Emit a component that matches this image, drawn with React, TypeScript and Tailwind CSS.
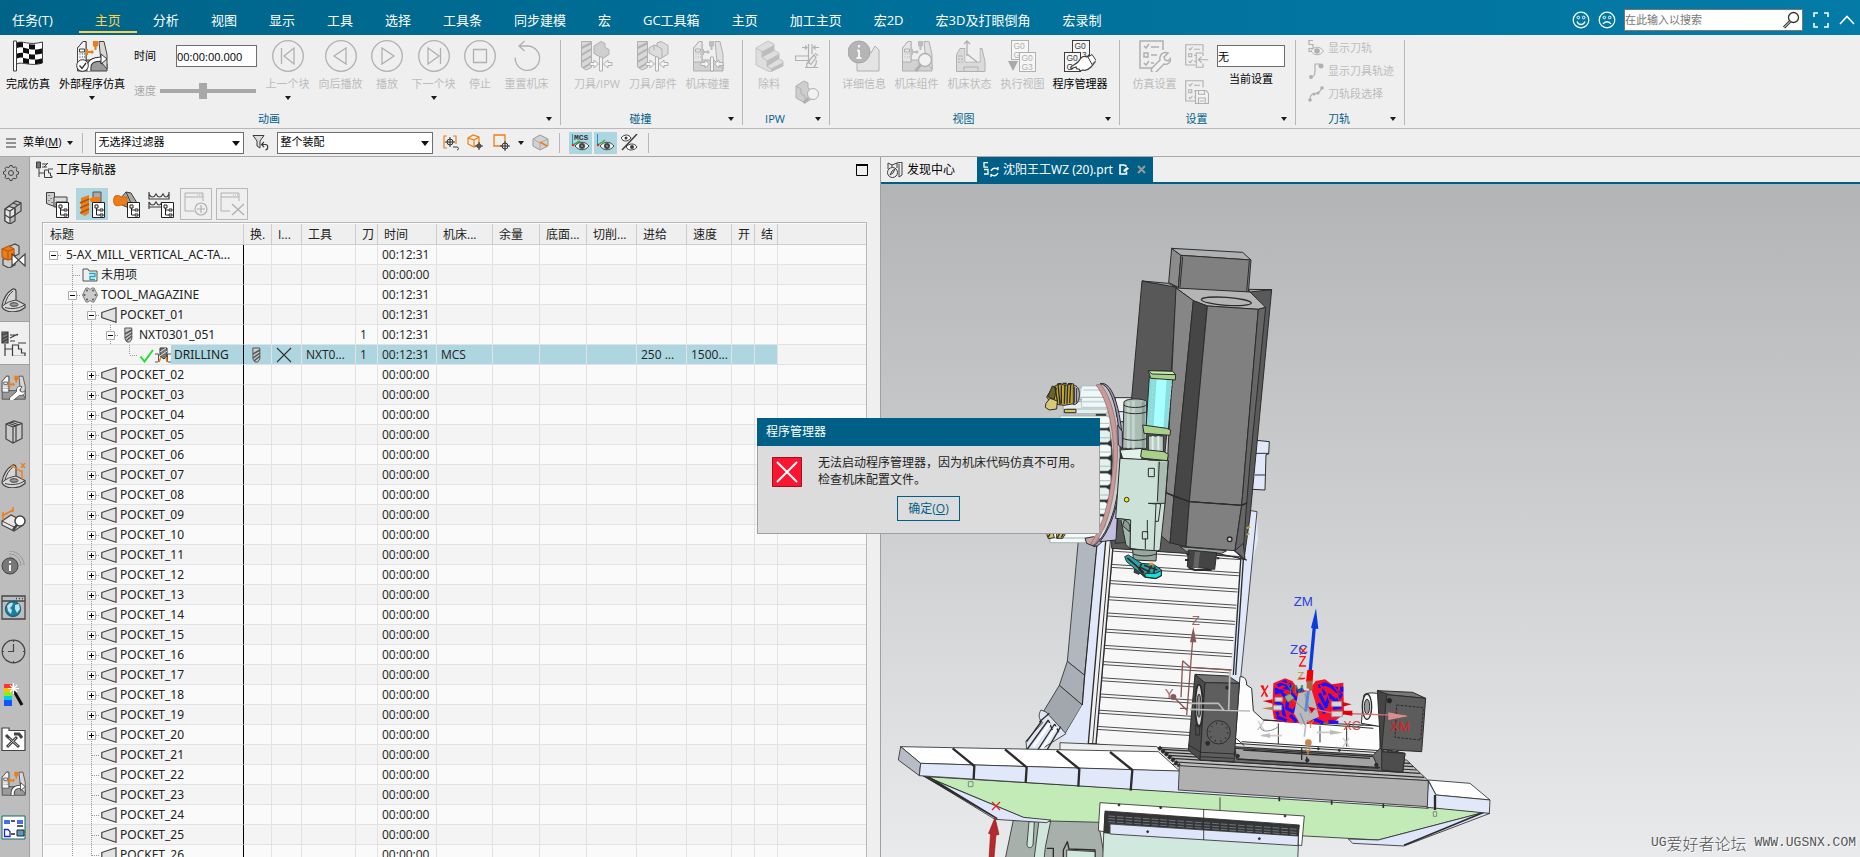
import React from "react";
import type { ReactNode } from "react";

const G = "#b0b0b0";
const D = "#3c3c3c";
const O = "#ef7d17";

type SvgProps = { size?: number; box?: string; children: ReactNode; className?: string };
function Svg({ size = 32, box = "0 0 32 32", children, className = "" }: SvgProps) {
  return (
    <svg width={size} height={size} viewBox={box} fill="none" className={"shrink-0 " + className} aria-hidden="true">
      {children}
    </svg>
  );
}

function Arrow({ className = "" }: { className?: string }) {
  return (
    <svg width="6" height="4" viewBox="0 0 6 4" className={"shrink-0 " + className} aria-hidden="true">
      <path d="M0 0h6L3 4z" fill="#1a1a1a" />
    </svg>
  );
}

/* ---------- ribbon icons ---------- */

function Flag() {
  return (
    <Svg>
      <path d="M1.500 1h3v30h-3z" fill="#fff" stroke={D} />
      <path d="M4.500 3c6-3 12 3 26-1v21c-12 4-20-2-26 1z" fill="#fff" stroke={D} />
      <path
        d="M5 3c2-1 4-1 6-.5v5C9 7 7 7 5 8zM17 4c2 .6 4 .6 6 .5v5c-2 .2-4 0-6-.5zM11 7.500c2 .3 4 1 6 1.500v5c-2-.5-4-1-6-1.300zM23 9.500c2 0 5-.5 7-1v5c-2 .7-5 1-7 1zM5 13.500c2-.8 4-1 6-.8v5c-2-.3-4 0-6 .8zM17 14c2 .6 4 .6 6 .5v5c-2 .2-4 0-6-.5zM11 17.700c2 .3 4 1 6 1.300v5c-2-.5-4-1-6-1.300zM23 19.500c2 0 5-.5 7-1v4.500c-2 .7-5 1-7 1z"
        fill="#111"
      />
    </Svg>
  );
}

function Cnc({ color = false, children, size = 32 }: { color?: boolean; children?: ReactNode; size?: number }) {
  const s = color ? "#444" : G;
  const o = color ? O : "#bdbdbd";
  return (
    <Svg size={size}>
      <path d="M1.500 8L7 1.500h3V20h12l4 4h5v7H1.500z" fill={color ? "#9b9b9b" : "#d2d2d2"} stroke={s} />
      <path d="M1.500 8L7 1.500h3V22H1.500z" fill={color ? "#f4f4f4" : "#e6e6e6"} stroke={s} />
      <path d="M23 1.500h5l3 13V29l-6-7z" fill={color ? "#d8d8d8" : "#e0e0e0"} stroke={s} />
      <path d="M3.500 9h5v3h-5zM3.500 14h1M6 14h1M3.500 17h1M6 17h1M8 14h1M8 17h1" stroke={s} />
      <path d="M17 1h5v5l-1.500 1v3h-2V7L17 6z" fill={o} />
      <path d="M10 9h2v2h3l1-1 2 2-2 2-1-1h-3v2h-2z" fill={o} />
      {children}
    </Svg>
  );
}

function ExternalSim() {
  return (
    <Cnc color>
      <path d="M13 31c-1-9 3-12 14-12" stroke="#333" strokeWidth="5" />
      <path d="M13 31c-1-9 3-12 14-12" stroke="#fff" strokeWidth="3" />
      <path d="M25 14l6 5-6 5z" fill="#fff" stroke="#333" />
      <circle cx="6.500" cy="25.500" r="5.800" fill="#fff" stroke="#333" />
      <path d="M3.500 25.500l2.500 3 4-5.500" stroke="#333" strokeWidth="1.300" />
    </Cnc>
  );
}

const collide = (
  <g fill="#f4f4f4" stroke={G}>
    <path d="M18.500 17h3v14h-3z" />
    <path d="M9 22.500h4V20l4.500 4-4.500 4v-2.500H9z" />
    <path d="M31 22.500h-4V20l-4.500 4 4.500 4v-2.500h4z" />
  </g>
);

const drill = (
  <g stroke={G}>
    <path d="M.5 1.500h10v26L5 30l-4.500-3z" fill="#d8d8d8" />
    <path d="M.5 8l10-5M.5 15l10-6M.5 22l10-6M2 28l8-5" strokeWidth="2" />
  </g>
);

function ToolIpw() {
  return (
    <Svg>
      {drill}
      <path d="M13 6l7-4.500 4 2v4l4 2v5l-6 4-9-5z" fill="#cfcfcf" stroke={G} />
      {collide}
    </Svg>
  );
}
function ToolPart() {
  return (
    <Svg>
      {drill}
      <path d="M12 8l5-3 3 1V3l4-1.500 7 4V14l-8 5-11-6z" fill="#dcdcdc" stroke={G} />
      <path d="M20 6l5 3v9M17 5v5" stroke={G} />
      {collide}
    </Svg>
  );
}
function Removal() {
  return (
    <Svg>
      <path d="M3 8l12-7 6 3v6l5 3v6l4 2v5l-13 6-14-7z" fill="#dedede" stroke="#c4c4c4" />
      <path d="M3 8l6 3.500v6l5 3v6l4 2" stroke="#c0c0c0" />
      <path d="M9 11.500L21 5v6L9 17.500zM14 20.500L26 14v5l-12 7.500zM18 28.500l12-6V26l-12 6z" fill="#bdbdbd" />
    </Svg>
  );
}
function Microscope() {
  return (
    <Svg size={24} box="0 0 24 24">
      <g stroke={G} strokeWidth="1.200">
        <path d="M13.500 0v16M17 0v10M12 3.500H7M10 1.500l2 2-2 2M18.500 3.500H24M20.500 1.500l-2 2 2 2M.5 12h13v4.500H.5z" />
        <path d="M10 23.500h13M19 11l-6 7 3 2.500 5-7zM20 9.500l3 2M12 23c-1-4 1-5 3-5M21 16c1 3 0 5-2 7" fill="#eee" />
      </g>
    </Svg>
  );
}
function CubeLens() {
  return (
    <Svg size={24} box="0 0 24 24">
      <path d="M1 6l8-5 4 2v5l5 3v7l-8 5-9-5z" fill="#cecece" stroke={G} />
      <path d="M1 6l5 3v5l4 2v7" stroke={G} />
      <circle cx="18" cy="14" r="5.500" fill="#f2f2f2" stroke={G} />
      <path d="M13.500 18l-5 5" stroke={G} strokeWidth="2.500" />
    </Svg>
  );
}
function Info() {
  return (
    <Svg>
      <path d="M9 31V13h14l4-7 4 4v21z" fill="#e4e4e4" stroke={G} />
      <circle cx="11" cy="12" r="11" fill="#b5b5b5" stroke="#a6a6a6" />
      <path d="M11 5v2.500M11 10v8M9 10.500h2M8.500 18h5" stroke="#f5f5f5" strokeWidth="2" />
    </Svg>
  );
}
function CncLens() {
  return (
    <Cnc>
      <circle cx="24" cy="20" r="6.500" fill="#f2f2f2" stroke={G} strokeWidth="1.400" />
      <path d="M19.500 25l-5 6" stroke={G} strokeWidth="3" />
    </Cnc>
  );
}
function CncState() {
  return (
    <Svg>
      <path d="M2.500 15L6 8.500h5V22h15V8.500h2l3 13v10H2.500z" fill="#dadada" stroke={G} />
      <path d="M11.500 9v12.500h14V9z" fill="#efefef" />
      <path d="M4 16h5M4 19h2M7 19h2M4 22h2M7 22h2M10 31v-4h14v4" stroke={G} />
      <path d="M13 16V1.500M10 4l3-3 3 3M13 14l10 8M13 16" stroke={G} strokeWidth="1.300" />
    </Svg>
  );
}
function GCode({ dark = false }: { dark?: boolean }) {
  const c = dark ? D : G;
  return (
    <Svg>
      <rect x={dark ? 8.5 : 4.5} y=".5" width="17" height="19" fill="#f6f6f6" stroke={c} />
      <text x={dark ? 10.5 : 6.5} y="8.500" fontSize="8.500" fontFamily="Liberation Sans, sans-serif" fill={c}>G0</text>
      <text x={dark ? 18 : 6.5} y="18" fontSize="8.500" fontFamily="Liberation Sans, sans-serif" fill={c}>{dark ? "3" : "G"}</text>
      <rect x={dark ? 0.5 : 12.5} y="12.500" width="16" height="19" fill="#f6f6f6" stroke={c} />
      <text x={dark ? 2.5 : 14.5} y="21" fontSize="8.500" fontFamily="Liberation Sans, sans-serif" fill={c}>G0</text>
      <text x={dark ? 2.5 : 14.5} y="30" fontSize="8.500" fontFamily="Liberation Sans, sans-serif" fill={c}>{dark ? "G" : "G3"}</text>
      {dark ? (
        <path d="M7 27c2-2 5-3 7-5l3-4c2-2 4-2 6-1l2-2 6 7-4 5c-2 2-5 4-8 3l-3 1-1-2-2 0-1-2-3 1c-1 1-3 1-2-1z" fill="#fff" stroke={D} strokeWidth="1.200" />
      ) : (
        <path d="M1 21h10L6 31z" fill="#a9a9a9" />
      )}
      {dark && <path d="M24 17l4-2.500 4 6-4 4z" fill="#fff" stroke={D} />}
    </Svg>
  );
}
function Checklist({ kind, size = 32 }: { kind: "wrench" | "in" | "save"; size?: number }) {
  return (
    <Svg size={size}>
      <path d="M24 10V1H1v27h13" stroke={G} strokeWidth="1.500" />
      <path d="M5 6l2 2 3-4M12 7h8M5 13h4v4H5zM12 15h6M5 23l2 2 3-4M12 23h3" stroke={G} strokeWidth="1.500" />
      {kind === "wrench" && (
        <path d="M13 28l8-8c-1-5 3-9 8-7l-4 4 1 3 3 1 3-3c0 5-4 7-7 6l-8 8c-3 2-6-1-4-4z" fill="#f2f2f2" stroke={G} strokeWidth="1.500" />
      )}
      {kind === "in" && (
        <>
          <path d="M24 16v-4h-9v19h9v-5" fill="#efefef" stroke={G} strokeWidth="1.500" />
          <path d="M31 21H18M22 17l-4 4 4 4" stroke={G} strokeWidth="1.500" />
        </>
      )}
      {kind === "save" && (
        <>
          <path d="M14 14h14l3.300 4v13.300H14z" fill="#f2f2f2" stroke={G} strokeWidth="1.500" />
          <path d="M18 14v5h8v-5M18 31v-7h9v7M20 28h5" stroke={G} strokeWidth="1.500" />
        </>
      )}
    </Svg>
  );
}
function Round({ children }: { children: ReactNode }) {
  return (
    <Svg>
      <circle cx="16" cy="16" r="15.300" stroke={G} strokeWidth="1.300" />
      <g stroke={G} strokeWidth="1.300">{children}</g>
    </Svg>
  );
}
const prevIcon = <Round><path d="M9.500 8v16M22 8v16L12 16z" /></Round>;
const backIcon = <Round><path d="M21 8v16L9 16z" /></Round>;
const playIcon = <Round><path d="M11 8v16l12-8z" /></Round>;
const nextIcon = <Round><path d="M22.500 8v16M10 8v16l11-8z" /></Round>;
const stopIcon = <Round><path d="M9.500 9.500h13v13h-13z" /></Round>;
const resetIcon = (
  <Svg>
    <path d="M8 6h9a12.200 12.200 0 1 1-12.800 11.500M13.500 1L8 6l5.500 5" stroke={G} strokeWidth="1.300" />
  </Svg>
);

/* ---------- ribbon ---------- */

function Tool({ icon, label, w, off = true, drop = false }: { icon: ReactNode; label: string; w: string; off?: boolean; drop?: boolean }) {
  return (
    <button type="button" disabled={off} className={"flex flex-col items-center self-start " + w + (off ? " text-[#bcbcbc]" : " text-black")}>
      {icon}
      <span className="mt-1 text-[11px] leading-4 whitespace-nowrap">{label}</span>
      {drop && <Arrow className="mt-1" />}
    </button>
  );
}

function Group({ title, children }: { title: string; children: ReactNode }) {
  return (
    <section className="flex flex-col border-r border-[#b8b8b8]">
      <div className="flex flex-1">{children}</div>
      <div className="flex h-3 items-center">
        <h2 className="flex-1 text-center text-[11px] leading-3 text-[#00618a]">{title}</h2>
        <button type="button" aria-label={title} className="flex w-[22px] justify-center"><Arrow /></button>
      </div>
    </section>
  );
}

function Ribbon() {
  return (
    <div className="flex h-[94px] shrink-0 border-b border-[#b8b8b8] bg-[#efefef] pt-[5px] pb-[3px]">
      <Group title="动画">
        <div className="flex pr-[7px]">
          <Tool icon={<Flag />} label="完成仿真" w="w-14" off={false} />
          <Tool icon={<ExternalSim />} label="外部程序仿真" w="w-[72px]" off={false} drop />
          <div className="w-[133px] pt-[5px] pr-1 pl-1.5 text-[11px]">
            <div className="flex h-[22px] items-center justify-between">
              <label htmlFor="time">时间</label>
              <input id="time" defaultValue="00:00:00.000" className="h-full w-[81px] border border-[#6e6e6e] bg-white" />
            </div>
            <div className="mt-4 flex h-4 items-center gap-1 text-[#a8a8a8]">
              <label htmlFor="speed">速度</label>
              <input
                id="speed"
                type="range"
                disabled
                defaultValue="44"
                className="h-1 w-24 appearance-none bg-[#a8a8a8] [&::-webkit-slider-thumb]:h-4 [&::-webkit-slider-thumb]:w-2 [&::-webkit-slider-thumb]:appearance-none [&::-webkit-slider-thumb]:bg-[#a8a8a8]"
              />
            </div>
          </div>
          <Tool icon={prevIcon} label="上一个块" w="w-[53px]" drop />
          <Tool icon={backIcon} label="向后播放" w="w-[53px]" />
          <Tool icon={playIcon} label="播放" w="w-10" />
          <Tool icon={nextIcon} label="下一个块" w="w-[53px]" drop />
          <Tool icon={stopIcon} label="停止" w="w-10" />
          <Tool icon={resetIcon} label="重置机床" w="w-[53px]" />
        </div>
      </Group>
      <Group title="碰撞">
        <div className="flex px-2">
          <Tool icon={<ToolIpw />} label="刀具/IPW" w="w-14" />
          <Tool icon={<ToolPart />} label="刀具/部件" w="w-14" />
          <Tool icon={<Cnc>{collide}</Cnc>} label="机床碰撞" w="w-[53px]" />
        </div>
      </Group>
      <Group title="IPW">
        <div className="flex pr-2.5">
          <Tool icon={<Removal />} label="除料" w="w-[52px]" />
          <div className="flex w-6 flex-col gap-3 pt-1 leading-none">
            <button type="button" disabled aria-label="显微检查"><Microscope /></button>
            <button type="button" disabled aria-label="检查 IPW"><CubeLens /></button>
          </div>
        </div>
      </Group>
      <Group title="视图">
        <div className="flex px-2">
          <Tool icon={<Info />} label="详细信息" w="w-[52px]" />
          <Tool icon={<CncLens />} label="机床组件" w="w-[53px]" />
          <Tool icon={<CncState />} label="机床状态" w="w-[53px]" />
          <Tool icon={<GCode />} label="执行视图" w="w-[53px]" />
          <Tool icon={<GCode dark />} label="程序管理器" w="w-[62px]" off={false} />
        </div>
      </Group>
      <Group title="设置">
        <div className="flex pr-2.5 pl-2">
          <Tool icon={<Checklist kind="wrench" />} label="仿真设置" w="w-[53px]" />
          <div className="ml-1 flex w-6 flex-col gap-3 pt-1">
            <button type="button" disabled aria-label="加载设置"><Checklist kind="in" size={24} /></button>
            <button type="button" disabled aria-label="保存设置"><Checklist kind="save" size={24} /></button>
          </div>
          <div className="ml-2 flex flex-col items-center gap-1 pt-[5px] text-[11px] leading-4">
            <input id="current" defaultValue="无" className="h-[22px] w-[68px] border border-[#6e6e6e] bg-white" />
            <label htmlFor="current">当前设置</label>
          </div>
        </div>
      </Group>
      <Group title="刀轨">
        <div className="flex flex-col gap-[7px] pr-2.5 pl-3 text-[11px] leading-4 text-[#bcbcbc]">
          <button type="button" disabled className="flex items-center gap-1">
            <Svg size={16} box="0 0 16 16">
              <path d="M5 .5H1v4h4v4H1v3h2" stroke={G} strokeWidth="1.200" />
              <path d="M3 11c3-5 9-5 12.500 0-3.500 5-9.500 5-12.500 0z" fill="#f2f2f2" stroke={G} />
              <circle cx="9" cy="11" r="2.800" fill={G} />
            </Svg>
            显示刀轨
          </button>
          <button type="button" disabled className="flex items-center gap-1">
            <Svg size={16} box="0 0 16 16">
              <path d="M3 14c4-1 4-3 4-7V1h5" stroke={G} strokeWidth="1.200" />
              <circle cx="3" cy="14" r="2" fill={G} /><circle cx="13" cy="3" r="2.500" fill={G} />
            </Svg>
            显示刀具轨迹
          </button>
          <button type="button" disabled className="flex items-center gap-1">
            <Svg size={16} box="0 0 16 16">
              <path d="M2 14c0-4 1-6 4-6s6-2 8-6" stroke={G} strokeWidth="1.200" />
              <circle cx="2" cy="14" r="1.800" fill={G} /><circle cx="6" cy="8" r="1.600" fill={G} /><circle cx="10" cy="7" r="1.600" fill={G} /><circle cx="14" cy="2" r="1.800" fill={G} />
            </Svg>
            刀轨段选择
          </button>
        </div>
      </Group>
    </div>
  );
}

/* ---------- header ---------- */

const tabs = ["分析", "视图", "显示", "工具", "选择", "工具条", "同步建模", "宏", "GC工具箱", "主页", "加工主页", "宏2D", "宏3D及打眼倒角", "宏录制"];

function Face({ sad = false }: { sad?: boolean }) {
  return (
    <Svg size={18} box="0 0 18 18">
      <circle cx="9" cy="9" r="7.800" stroke="#fff" strokeWidth="1.200" />
      <circle cx="6.300" cy="6.500" r="1.300" stroke="#fff" /><circle cx="11.700" cy="6.500" r="1.300" stroke="#fff" />
      <path d={sad ? "M5 13c2-3 6-3 8 0" : "M5 10.500c1.500 4 6.500 4 8 0"} stroke="#fff" strokeWidth="1.300" />
    </Svg>
  );
}

function Header() {
  return (
    <header className="flex h-[35px] shrink-0 items-end bg-gradient-to-r from-[#006489] via-[#00709a] to-[#047ba7] text-[13px] text-white">
      <nav className="flex h-[30px] whitespace-nowrap">
        <a href="#task" className="mr-2.5 pr-4 pl-3 leading-[30px]">任务(T)</a>
        <a href="#home" className="mb-0.5 border-b-2 border-[#ffd04a] px-4 leading-[30px] text-[#ffd04a]">主页</a>
        {tabs.map((t) => (
          <a key={t} href={"#" + t} className="px-4 leading-[30px]">{t}</a>
        ))}
      </nav>
      <div className="ml-auto flex h-[30px] items-center pr-[5px]">
        <button type="button" aria-label="满意"><Face /></button>
        <button type="button" aria-label="不满意" className="ml-2"><Face sad /></button>
        <div className="ml-2 flex h-[22px] w-[179px] items-center border border-[#777] bg-white pr-0.5">
          <input type="search" aria-label="搜索" placeholder="在此输入以搜索" className="min-w-0 flex-1 text-[11px] text-black outline-none placeholder:text-[#777]" />
          <Svg size={18} box="0 0 18 18">
            <circle cx="11.500" cy="6.500" r="5" stroke="#333" strokeWidth="1.300" />
            <path d="M8 10.500L2 16.500" stroke="#333" strokeWidth="3" /><path d="M8 10.500L2 16.500" stroke="#fff" />
          </Svg>
        </div>
        <button type="button" aria-label="全屏" className="ml-2.5">
          <Svg size={16} box="0 0 16 16"><path d="M1 5V1h4M11 1h4v4M15 11v4h-4M5 15H1v-4" stroke="#fff" strokeWidth="1.600" /></Svg>
        </button>
        <button type="button" aria-label="收起功能区" className="ml-2.5">
          <Svg size={16} box="0 0 16 16"><path d="M1 12l7-7.500 7 7.500" stroke="#fff" strokeWidth="1.600" /></Svg>
        </button>
      </div>
    </header>
  );
}

/* ---------- selection bar ---------- */

function Combo({ label, value, w }: { label: string; value: string; w: string }) {
  return (
    <div className={"relative h-[22px] " + w}>
      <select aria-label={label} className="h-full w-full appearance-none border border-[#6e6e6e] bg-white pl-0.5 text-[11px]">
        <option>{value}</option>
      </select>
      <svg width="8" height="5" viewBox="0 0 8 5" className="pointer-events-none absolute top-[9px] right-1" aria-hidden="true">
        <path d="M0 0h8L4 5z" fill="#111" />
      </svg>
    </div>
  );
}

function Target({ x, y, r = 4 }: { x: number; y: number; r?: number }) {
  return (
    <g stroke="#333">
      <circle cx={x} cy={y} r={r - 1} fill="#ddd" />
      <path d={`M${x - r - 1} ${y}h${2 * r + 2}M${x} ${y - r - 1}v${2 * r + 2}`} />
    </g>
  );
}

function Eye() {
  return (
    <>
      <path d="M4 12c4-5 10-5 14 0-4 5-10 5-14 0z" fill="#e8f3f6" stroke="#444" />
      <circle cx="11" cy="12" r="3" fill="#444" /><circle cx="11" cy="12" r="1" fill="#999" />
    </>
  );
}

function SelectionBar() {
  return (
    <div className="flex h-7 shrink-0 items-center border-b border-[#a8a8a8] bg-[#efefef] text-[11px]">
      <button type="button" className="flex items-center pl-1.5">
        <Svg size={10} box="0 0 10 10"><path d="M0 1h10M0 5h10M0 9h10" stroke="#333" /></Svg>
        <span className="mr-1.5 ml-[7px]">菜单(<u>M</u>)</span>
        <Arrow />
      </button>
      <span className="mr-3 ml-[9px] h-5 w-px bg-[#b8b8b8]" />
      <Combo label="类型过滤器" value="无选择过滤器" w="w-[149px]" />
      <button type="button" aria-label="重置过滤器" className="mr-2 ml-2">
        <Svg size={17} box="0 0 17 17">
          <path d="M1 1.500h11l-4 5.500v7l-3-2V7z" fill="#ddd" stroke={D} /><path d="M9.500 10.500h4c3 0 3 5 0 5.500M12 8l-2.500 2.500L12 13" stroke={D} strokeWidth="1.200" />
        </Svg>
      </button>
      <Combo label="选择范围" value="整个装配" w="w-[156px]" />
      <button type="button" aria-label="选择组" className="ml-2.5">
        <Svg size={16} box="0 0 16 16"><path d="M4 1H1v12h3M10 1h3v8" stroke={O} strokeWidth="1.200" /><Target x={7} y={7} /><path d="M10 12h4c2 0 2 3 0 3" stroke={D} /></Svg>
      </button>
      <button type="button" aria-label="体选择" className="ml-2">
        <Svg size={17} box="0 0 17 17"><path d="M1 4l5-3 6 2v7l-5 3-6-3zM1 4l6 2 5-3M7 6v7" fill="#f6ede2" stroke={O} strokeWidth="1.200" /><Target x={12} y={12} r={3} /></Svg>
      </button>
      <button type="button" aria-label="矩形选择" className="ml-[9px] flex items-center gap-2">
        <Svg size={17} box="0 0 17 17"><path d="M1 1h11v11H1z" stroke={O} strokeWidth="1.300" /><Target x={12} y={12} /></Svg>
        <Arrow />
      </button>
      <button type="button" aria-label="剖切" className="ml-2">
        <Svg size={17} box="0 0 17 17"><path d="M1 5l7-4 8 4v7l-8 4-7-4z" fill="#d2d2d2" stroke="#999" /><path d="M1 5l7 4 8-4M8 9v7" stroke="#aaa" /><path d="M8 8l7 4" stroke={O} strokeWidth="1.500" /></Svg>
      </button>
      <span className="mr-[9px] ml-2.5 h-5 w-px bg-[#b8b8b8]" />
      <button type="button" aria-pressed="true" aria-label="显示 MCS" className="flex h-[22px] w-[23px] items-center justify-center bg-[#aed6e1]">
        <Svg size={19} box="0 0 19 19">
          <path d="M1.500 1v11" stroke="#2a8fc0" /><path d="M2 12l7-4" stroke="#29b34a" strokeWidth="1.500" /><circle cx="2" cy="12" r="1.200" fill="#e22" />
          <text x="3" y="6.500" fontSize="8" fontWeight="bold" fontFamily="Liberation Mono, monospace" fill="#333">MCS</text>
          <g transform="translate(0 1)"><Eye /></g>
        </Svg>
      </button>
      <button type="button" aria-pressed="true" aria-label="显示 WCS" className="ml-0.5 flex h-[22px] w-[23px] items-center justify-center bg-[#aed6e1]">
        <Svg size={19} box="0 0 19 19">
          <path d="M1.500 1v11" stroke="#2a8fc0" /><path d="M2 12l7-5" stroke="#29b34a" strokeWidth="1.500" /><circle cx="2" cy="12" r="1.200" fill="#e22" />
          <g transform="translate(0 1)"><Eye /></g>
        </Svg>
      </button>
      <button type="button" aria-label="隐藏" className="ml-1">
        <Svg size={17} box="0 0 17 17">
          <path d="M0 4c3-4 8-4 10 0-3 4-8 4-10 0zM5 13c3-4 9-4 11 0-3 4-9 4-11 0z" fill="#fff" stroke={D} />
          <circle cx="5" cy="4" r="1.500" fill={D} /><circle cx="11" cy="13" r="2" fill={D} /><path d="M16 0L1 16" stroke={D} strokeWidth="1.500" />
        </Svg>
      </button>
      <span className="ml-2.5 h-5 w-px bg-[#b8b8b8]" />
    </div>
  );
}

/* ---------- side bar ---------- */

const S = "#444";
const bracket = (
  <>
    <path d="M1 19C2 11 7 5 11 2.500c2-1.200 4-.5 4 2V13l9 4.500v3C19 25 10 26 5 23.500 2 22 1 21 1 19z" fill="#d6d6d6" stroke={S} strokeWidth="1.200" />
    <path d="M15 13c-6 1-10 3-13.500 6M12 4c-4 3-7 8-8 13" stroke={S} />
    <path d="M24 17.500c-5 4-13 5-20 3" stroke={S} />
    <ellipse cx="13" cy="17.500" rx="4" ry="1.800" fill="#9a9a9a" stroke={S} />
  </>
);
const sideIcons: { name: string; icon: ReactNode }[] = [
  { name: "装配导航器", icon: <g stroke={S} strokeWidth="1.200"><path d="M4 10l8-6 3-2 5 2v8l-6 4v6l-5 3-5-3z" fill="#bdbdbd" /><path d="M4 10l4-2.500 6 2V16l-5 3v6l-5-3z" fill="#e6e6e6" /><path d="M4 10l5 2 11-8M9 12v7M4 16l5 3 5-3M12 4l5 2M14 9.500v7" /></g> },
  { name: "约束导航器", icon: <g stroke={S} strokeWidth="1.200"><path d="M2 16v6l6 3 6-3v-6zM9 3l5-2 4 2v8l-4 2z" fill="#ccc" /><path d="M1 6l7-3 5 3v9l-6 2-6-3z" fill={O} stroke="#b85c0b" /><path d="M1 6l6 2 6-2M7 8v9" stroke="#b85c0b" /><path d="M11 11l13 12V11L11 23z" fill="#fff" /></g> },
  { name: "部件导航器", icon: bracket },
  { name: "工序导航器", icon: <g stroke={D} strokeWidth="1.200"><path d="M1 1h6v11H1z" fill="#777" /><path d="M1 4l6-2M1 8l6-3M1 11l6-3M9 4h8M9 7l8-4M9 10h5M4 13v12M4 18h7M11.500 14h6v4h3v4H24v3.400H11.500zM17 12h8" /></g> },
  { name: "机床导航器", icon: null },
  { name: "重用库", icon: <g stroke={S} strokeWidth="1.200"><path d="M5 5l8-3 8 2.500v15L12 24l-7-4z" fill="#c9c9c9" /><path d="M5 5l7 3v16M12 8l9-3.500M7.500 4l7.500 3v15.500M10 3l8 3" /></g> },
  { name: "PMI", icon: <>{bracket}<path d="M11 1v4M11 3l10 6M21 7v10M20 0l4 5M24 0l-4 5" stroke={O} strokeWidth="1.300" /></> },
  { name: "测量", icon: <g stroke={S}><path d="M1 14l9-6 12 6v4l-9 6-12-6z" fill="#e6e6e6" strokeWidth="1.200" /><path d="M1 14l12 6v4M13 20l5-3" /><path d="M1 9l11-6M2 5v8M12 0v5" stroke={O} strokeWidth="1.500" /><circle cx="19" cy="14" r="5" fill="#fff" strokeWidth="1.500" /><path d="M16 18l-4 5" strokeWidth="2.500" /></g> },
  { name: "信息", icon: <g stroke="#999"><path d="M8 3c8 0 12 6 12 12M8 0c10 0 15 8 15 14M8 6c5 0 9 5 9 9" /><circle cx="9" cy="15" r="8" fill="#777" stroke={S} /><path d="M9 10v2M9 14v6" stroke="#fff" strokeWidth="1.800" /></g> },
  { name: "浏览器", icon: <g stroke={S} strokeWidth="1.300"><path d="M1 1h23v23H1zM1 6h23" /><path d="M15 3.500h1M18 3.500h1M21 3.500h1" /><circle cx="12" cy="14" r="7.500" fill="#1d7f9f" stroke="#156480" /><path d="M6 11c2-3 4-4 6-3l-1 3-2 2 2 2-1 4-3-3zM14 10l4-1 1 5-3 4-2-4z" fill="#bfe3ee" stroke="none" /></g> },
  { name: "历史记录", icon: <g stroke={S} strokeWidth="1.200"><circle cx="12.500" cy="12.500" r="11.300" /><path d="M12.500 5v7.500H7M12.500 1v2M12.500 22v2M1 12.500h2M22 12.500h2" /></g> },
  { name: "可视化", icon: <><path d="M3 1h8v4H3z" fill="#f33" /><path d="M3 5h8v4H3z" fill="#fb0" /><path d="M3 9h8v4H3z" fill="#8e2" /><path d="M3 13h8v4H3z" fill="#0ce" /><path d="M3 17h8v6H3z" fill="#15f" /><path d="M13 8l8 14" stroke="#111" strokeWidth="3" /><path d="M9 2l7 7M16 2L9 9M12.500 0v11M7 5.500h11" stroke="#fff" strokeWidth="1.200" /></> },
  { name: "角色", icon: <g stroke={S}><path d="M1 23.500V1h7v2.500h16v20z" fill="#fff" strokeWidth="1.200" /><path d="M5 8l3 3M7 10l11 10M6 20l10-10M13 7l5 0 3 4" strokeWidth="3" /><path d="M8 11l9 8M7 19l8-8" stroke="#bbb" /></g> },
  { name: "仿真导航器", icon: null },
  { name: "系统", icon: <><path d="M1 1h23v23H1z" fill="#fff" stroke="#0a6a6a" /><path d="M3 5h6v4H3zM16 5h6v4h-6z" fill="#4a6cf0" /><path d="M10 6h4M10 19h4M16 11h6" stroke="#222" strokeWidth="1.300" /><path d="M3.500 14.500H7l2 2v5H3.500z" stroke="#22d" fill="#fff" strokeWidth="1.300" /><path d="M16 15h7v6h-7z" fill="#5a9ac0" stroke="#222" /></> },
];

function Sidebar() {
  return (
    <nav className="overflow-hidden border-r border-[#a0a0a0] bg-[#bdbdbd]" aria-label="资源条">
      <button type="button" aria-label="资源条选项" className="flex h-8 w-full items-center pl-[3px]">
        <Svg size={16} box="0 0 16 16">
          <path d="M6.500 2l.4-1.500h2.200L9.500 2l1.500.6 1.400-.8 1.600 1.600-.8 1.400.6 1.500 1.700.5v2.200l-1.700.5-.6 1.500.8 1.400-1.600 1.600-1.400-.8-1.500.6-.4 1.700H6.900l-.4-1.700-1.500-.6-1.400.8L2 12.400l.8-1.400-.6-1.500L.5 9V6.800l1.700-.5.6-1.500L2 3.400l1.600-1.600 1.400.8z" stroke={S} />
          <circle cx="8" cy="8" r="2.500" stroke={S} />
        </Svg>
      </button>
      {sideIcons.map((s, i) => (
        <button
          key={s.name}
          type="button"
          aria-label={s.name}
          className={"flex h-11 items-center pl-px " + (i === 3 ? "w-[30px] border-y border-[#a0a0a0] bg-[#efefef]" : "w-full")}
        >
          {s.icon ? (
            <Svg size={25} box="0 0 25 25">{s.icon}</Svg>
          ) : i === 4 ? (
            <Cnc color size={25}><path d="M11 29l9-8c-1-5 3-8 7-6l-3 4 1 2 3 1 3-2c0 4-3 7-7 6l-9 7c-3 1-5-1-4-4z" fill="#fff" stroke={D} /></Cnc>
          ) : (
            <Cnc color size={25}><path d="M15 31c-1-8 3-11 12-11" stroke="#333" strokeWidth="5" /><path d="M15 31c-1-8 3-11 12-11" stroke="#fff" strokeWidth="3" /><path d="M25 15l6 5-6 5z" fill="#fff" stroke="#333" /></Cnc>
          )}
        </button>
      ))}
    </nav>
  );
}

/* ---------- navigator ---------- */

type Guide = "none" | "line" | "tee" | "end" | "plus" | "minus";
function Cell({ g, root = false }: { g: Guide; root?: boolean }) {
  const box = g === "plus" || g === "minus";
  return (
    <svg width="19" height="20" viewBox="0 0 19 20" fill="none" className="shrink-0" aria-hidden="true">
      {g !== "none" && !root && <path d="M9.500 0v10" stroke="#999" strokeDasharray="1 1" />}
      {g !== "none" && g !== "end" && !root && <path d="M9.500 10v10" stroke="#999" strokeDasharray="1 1" />}
      {g !== "none" && g !== "line" && <path d="M10 10.500h8" stroke="#999" strokeDasharray="1 1" />}
      {box && <path d="M5.500 6.500h8v8h-8z" fill="#fff" stroke="#aaa" />}
      {box && <path d="M7 10.500h5" stroke="#000" />}
      {g === "plus" && <path d="M9.500 8v5" stroke="#000" />}
    </svg>
  );
}

const pocketIcon = (
  <Svg size={16} box="0 0 16 16"><path d="M.8 5.500L15 .8v14.400L.8 10.500z" fill="#e2e2e2" stroke="#444" strokeWidth="1.200" /></Svg>
);
const toolBit = (
  <svg width="9" height="16" viewBox="0 0 9 16" fill="none" className="shrink-0" aria-hidden="true">
    <path d="M.8 1h7v11l-2 3H3l-2-3z" fill="#ccc" stroke="#555" /><path d="M1 7l7-4M1 11l7-5M2 14l6-5" stroke="#555" strokeWidth="1.500" />
  </svg>
);

type RowData = { key: string; guides: Guide[]; icon?: ReactNode; cells: Record<number, ReactNode>; selected?: boolean };

const cols = [
  { t: "标题", w: 200 }, { t: "换.", w: 28 }, { t: "I...", w: 30 }, { t: "工具", w: 54 }, { t: "刀", w: 22 }, { t: "时间", w: 59 }, { t: "机床...", w: 56 },
  { t: "余量", w: 47 }, { t: "底面...", w: 47 }, { t: "切削...", w: 50 }, { t: "进给", w: 50 }, { t: "速度", w: 45 }, { t: "开", w: 23 }, { t: "结", w: 23 },
];

const rows: RowData[] = [
  { key: "5-AX_MILL_VERTICAL_AC-TA...", guides: ["minus"], cells: { 5: "00:12:31" } },
  {
    key: "未用项", guides: ["none", "tee"], cells: { 5: "00:00:00" },
    icon: <Svg size={16} box="0 0 16 16"><path d="M1 14V2h5l1 2h8v10z" fill="#eee" stroke="#555" /><path d="M7 6.500h6v3H8v3h5" stroke="#19a7c4" strokeWidth="1.300" /></Svg>,
  },
  {
    key: "TOOL_MAGAZINE", guides: ["none", "minus"], cells: { 5: "00:12:31" },
    icon: <Svg size={16} box="0 0 16 16"><path d="M4 1h2l2 1.500L10 1h2l1 2 2.500 5-2.500 5-1 2h-2l-2-1.500L6 15H4l-1-2L.5 8 3 3z" fill="#ccc" stroke="#777" /><circle cx="5" cy="3.500" r="1" fill="#555" /><circle cx="11" cy="3.500" r="1" fill="#555" /><circle cx="2.500" cy="8" r="1" fill="#555" /><circle cx="13.500" cy="8" r="1" fill="#555" /><circle cx="5" cy="12.500" r="1" fill="#555" /><circle cx="11" cy="12.500" r="1" fill="#555" /></Svg>,
  },
  { key: "POCKET_01", guides: ["none", "line", "minus"], icon: pocketIcon, cells: { 5: "00:12:31" } },
  { key: "NXT0301_051", guides: ["none", "line", "line", "minus"], icon: <span className="flex w-4 justify-center">{toolBit}</span>, cells: { 4: "1", 5: "00:12:31" } },
  {
    key: "DRILLING", guides: ["none", "line", "line", "none", "end"], selected: true,
    icon: (
      <>
        <Svg size={16} box="0 0 16 16"><path d="M1.500 9.500l4 5L14 3" stroke="#22dd33" strokeWidth="2" /></Svg>
        <Svg size={16} box="0 0 16 16"><path d="M5 1h7v8l-3 3-4-3z" fill="#777" stroke="#333" /><path d="M5 5l6-4M5 9l7-5" stroke="#ddd" /><path d="M3.500 15V7H0M0 15h3M16 15h-3M12.500 15V7H16" stroke="#555" /><path d="M4 15l2-5M12 15l-1-5" stroke={O} strokeWidth="1.500" /></Svg>
      </>
    ),
    cells: {
      1: <span className="flex pl-2">{toolBit}</span>,
      2: <Svg size={16} box="0 0 16 16" className="ml-1"><path d="M1 1l14 14M15 1L1 15" stroke="#333" strokeWidth="1.200" /></Svg>,
      3: "NXT0...", 4: "1", 5: "00:12:31", 6: "MCS", 10: "250 ...", 11: "1500...",
    },
  },
];
for (let n = 2; n <= 26; n++) {
  rows.push({
    key: "POCKET_" + String(n).padStart(2, "0"),
    guides: ["none", "line", n <= 20 ? "plus" : "tee"],
    icon: pocketIcon,
    cells: { 5: "00:00:00" },
  });
}

const tree = (
  <g>
    <path d="M15.500 13.500h12v15h-12z" fill="#fff" stroke="#222" />
    <path d="M18 16h3v3h-3zM23 20h3v2h-3zM23 25h3v2h-3z" stroke="#222" /><path d="M19.500 19v7h3M19.500 21h3" stroke="#222" />
  </g>
);
function ViewButton({ label, w = "w-8", look = "", children }: { label: string; w?: string; look?: string; children: ReactNode }) {
  return (
    <button type="button" aria-label={label} className={"flex h-8 items-center justify-center " + w + " " + look}>
      <Svg size={30} box="0 0 30 30">{children}</Svg>
    </button>
  );
}

function Navigator() {
  return (
    <section className="flex min-h-0 min-w-0 flex-col bg-[#efefef]">
      <div className="flex h-[25px] items-center pr-3 pl-1.5">
        <Svg size={17} box="0 0 17 17"><path d="M.5 1h4v6h-4z" fill="#777" stroke={D} /><path d="M6 3h5M8 6l4-4M6 6h5M3 8v8M3 12h5M8.500 9h4v3h2v3h1.500v1.500H8.500zM12 8h5" stroke={D} /></Svg>
        <h1 className="ml-[3px] text-[12px] leading-4">工序导航器</h1>
        <button type="button" aria-label="最大化" className="ml-auto">
          <Svg size={12} box="0 0 12 12"><path d="M.5 1h11v10.500H.5z" stroke="#000" /><path d="M0 1h12" stroke="#000" strokeWidth="2" /></Svg>
        </button>
      </div>
      <div className="mt-1.5 flex gap-1 pl-2.5">
        <ViewButton label="程序顺序视图"><path d="M5.500 3.500h8v14l-8-3z" fill="#ccc" stroke={D} /><path d="M13 8h13v5H15v5h-2z" fill="#ddd" stroke={D} /><path d="M8 6v1M10 9v1M8 11v1M11 13v1" stroke={D} />{tree}</ViewButton>
        <ViewButton label="机床视图" look="bg-[#aed6e1]"><path d="M16 3h8v10h-8z" fill="#aaa" stroke="#555" /><path d="M12 10l4-2h7v5H14z" fill={O} /><path d="M4 9l8-3v18l-4 3-4-2z" fill={O} /><path d="M3 14l9-4M3 19l9-4M3 24l9-4" stroke="#a8550d" strokeWidth="1.500" />{tree}</ViewButton>
        <ViewButton label="几何视图" w="w-[30px]"><path d="M9 9l5-6 5 1 6 10-8 5-7-3z" fill="#aaa" stroke={D} /><path d="M14 3l5 11" stroke={D} /><path d="M3 7c3-1 5 0 6 1h6v8H9c-2 1-5 1-6 0-2-3-2-6 0-9z" fill={O} stroke="#c9670f" />{tree}</ViewButton>
        <ViewButton label="加工方法视图" w="w-[30px]"><path d="M3 3v7h20V3M3 5c2 4 5 4 7 0 2 4 5 4 7 0 2 4 4 4 6 0M3 20v-7c2 4 5 4 7 0 2 4 4 4 6 0M3 18h12" stroke={D} strokeWidth="1.200" />{tree}</ViewButton>
        <ViewButton label="新建视图" look="border border-[#b8b8b8]"><path d="M13 22H4V4h18v8M4 8h18M16 6h1M18 6h1M20 6h1" stroke={G} /><circle cx="20" cy="20" r="6" stroke={G} strokeWidth="1.200" /><path d="M20 16v8M16 20h8" stroke={G} strokeWidth="1.200" /></ViewButton>
        <ViewButton label="删除视图" look="border border-[#b8b8b8]"><path d="M13 22H4V4h18v8M4 8h18M16 6h1M18 6h1M20 6h1" stroke={G} /><path d="M15 15l12 11M27 15L15 26" stroke={G} strokeWidth="1.300" /></ViewButton>
      </div>
      <div className="mt-0.5 mr-[13px] ml-3 min-h-0 flex-1 overflow-hidden border border-b-0 border-[#b8b8b8] bg-[#fafafa] pt-px pl-px">
        <table className="w-full table-fixed border-separate border-spacing-0 text-[12px] leading-4 text-[#222]">
          <colgroup>
            {cols.map((c) => <col key={c.t} style={{ width: c.w }} />)}
            <col />
          </colgroup>
          <thead>
            <tr className="h-[21px] bg-[#efefef]">
              {cols.map((c) => (
                <th key={c.t} scope="col" className="overflow-hidden border-r border-b border-[#cdcdcd] pt-0.5 pb-0 pl-1.5 text-left font-normal whitespace-nowrap">{c.t}</th>
              ))}
              <td className="border-b border-[#cdcdcd] p-0" />
            </tr>
          </thead>
          <tbody>
            {rows.map((r, ri) => (
              <tr key={r.key} className={ri % 2 ? "bg-[#f4f4f4]" : "bg-[#fafafa]"}>
                <th scope="row" className="h-5 overflow-hidden border-r border-b border-r-black border-b-[#e2e2e2] p-0 text-left font-normal whitespace-nowrap">
                  <div className="flex h-[19px] items-center font-['Noto_Sans','Noto_Sans_CJK_SC',sans-serif]">
                    {r.guides.map((g, gi) => (
                      <Cell key={gi} g={g} root={ri === 0} />
                    ))}
                    {r.icon}
                    <span className={"flex h-full items-center pl-[3px] " + (r.selected ? "flex-1 bg-[#aed6e1]" : "")}>{r.key}</span>
                  </div>
                </th>
                {cols.slice(1).map((c, ci) => (
                  <td
                    key={c.t}
                    className={"h-5 overflow-hidden border-r border-b border-[#e2e2e2] p-0 whitespace-nowrap " + (r.selected ? "bg-[#aed6e1] " : "") + (ci < 2 ? "" : "pl-1")}
                  >
                    {r.cells[ci + 1]}
                  </td>
                ))}
                <td className="h-5 border-b border-[#e2e2e2] p-0" />
              </tr>
            ))}
          </tbody>
        </table>
      </div>
    </section>
  );
}

/* ---------- machine scene ---------- */

const K = "#2c2c2c";

function ColumnAndBase() {
  const lines = Array.from({ length: 13 }, (_, i) => -84 + i * 48.6);
  return (
    <g transform="translate(880 560) scale(.33333)" stroke={K} strokeWidth="2.500" strokeLinejoin="round">
      <path d="M597-80L562 304 614 346 655-80z" fill="#b1b7be" />
      <path d="M562 304L538 376 607 435 614 346z" fill="#a9afb6" />
      <path d="M538 376L490 455 556 520 607 435z" fill="#a2a7ad" />
      <path d="M655-90L607 435 540 550 630 552 685-90z" fill="#e1e8fa" stroke="none" />
      <path d="M655-90L614 346 607 435" fill="none" strokeWidth="3.500" />
      <path d="M705-110L648 552 840 575 1040 585 1090-90z" fill="#f7f7f7" />
      {lines.map((y) => {
        const xl = 697 - y * 0.089;
        const xr = 1081 - y * 0.075;
        const y2 = y + (xr - xl) * 0.066;
        return <path key={y} d={`M${xl} ${y}L${xr} ${y2}M${xl} ${y + 9}L${xr} ${y2 + 9}`} strokeWidth="2.500" fill="none" />;
      })}
      <path d="M680-90L625 550 648 552 705-110z" fill="#f1f1f1" strokeWidth="4" />
      <path d="M694-90L638 550" fill="none" strokeWidth="3" />
      <path d="M1092-130L1130-120 1075 385 1050 360z" fill="#e1e8fa" stroke="none" />
      <path d="M1113-148L1131-145 1134-60 1113 20 1080 375 1055 355 1092-30z" fill="#e1e8fa" stroke="none" />
      <path d="M1113-148L1131-145 1080 375" fill="none" />
      <path d="M1084-30L1060 345M1092-30L1067 345" fill="none" strokeWidth="4" />
      <path d="M483 450c-10 15-5 30 5 38l-50 55 2 28h38l80-50-60-65z" fill="#dfe5f2" />
      <path d="M440 545l45-62M440 570l65-90M472 572l52-80M500 572l42-72M478 486l30-26M505 480l12 30M524 492l12 25" fill="none" strokeWidth="4" />
      <path d="M510 490l-50 70M530 500l-45 68" fill="none" stroke="#fff" strokeWidth="7" />
      <path d="M540 548L830 560 900 615 540 590z" fill="#efefef" />

      <path d="M400 780L660 783 660 815 675 900 375 900z" fill="#a8b0ac" />
      <path d="M477 780L512 783 496 862 492 900 462 900z" fill="#cfe6dc" />
      <path d="M447 785h16l-4 70c-5 12-18 10-18-2z" fill="#cfe6dc" />
      <path d="M500 865h20v35M550 870l12-25 5 22 78 3v30M550 870v30" fill="none" strokeWidth="4" />
      <path d="M560 870l85 5v30h-85z" fill="#cfe6dc" />
      <path d="M672 800L1255 855 1253 905 668 905z" fill="#d1e8de" />

      <path d="M140 650L430 772 510 783 700 788 1275 828 1495 840 1812 757 1640 740z" fill="#c3ebb8" />
      <path d="M130 647L345 778 500 788 512 780 430 772z" fill="#dfe6fa" />
      <path d="M130 647L345 772M145 650L352 776" fill="none" strokeWidth="4" />
      <path d="M1812 757L1495 840 1405 837 1418 850 1572 858 1830 760z" fill="#dfe6fa" />
      <path d="M1812 757L1572 856" fill="none" strokeWidth="5" />
      <path d="M1020 712v38" fill="none" />
      <path d="M62 560L835 575 900 634 122 610z" fill="#fff" />
      <path d="M62 560L122 610 118 647 55 600z" fill="#b7bcc7" />
      <path d="M122 610L898 633 1650 690 1645 745 118 647z" fill="#e1e8fa" />
      <path d="M1645 660L1770 670 1830 720 1668 705z" fill="#fff" />
      <path d="M1645 663L1668 705 1830 720 1828 760 1640 742z" fill="#e1e8fa" />
      <path d="M1665 705v45" fill="none" strokeWidth="7" />
      <path d="M218 565L283 618 281 657M375 568L440 622 437 668M530 572L598 627 595 680M690 576L757 630 752 692" fill="none" strokeWidth="7" />
      <path d="M1198 708v16M1355 718v16M1510 728v16" fill="none" strokeWidth="5" />

      <path d="M660 728L1273 768 1265 857 1255 855 1255 800 675 760 672 815 655 812z" fill="#fff" />
      <path d="M675 753L1258 795 1255 828 688 790 688 820 672 818z" fill="#353535" />
      <path d="M685 768L1250 808M685 776L1250 817M685 785L1250 824" stroke="#8b95a8" strokeWidth="2" strokeDasharray="20 6" fill="none" />
      <path d="M690 792L1255 828 1254 857 690 822z" fill="#dfe6fa" />
      <path d="M971 748v92" fill="none" />
      <circle cx="803" cy="815" r="3" fill={K} /><circle cx="1138" cy="836" r="3" fill={K} /><circle cx="717" cy="735" r="3" fill={K} /><circle cx="842" cy="743" r="3" fill={K} /><circle cx="1215" cy="768" r="3" fill={K} />

      <path d="M835 562L1580 600 1645 662 898 618z" fill="#bdbdbd" />
      <path d="M845 568L1590 610M855 577L1600 620M865 586L1610 630M875 595L1620 640M887 606L1632 652" strokeWidth="3.500" fill="none" />
      <path d="M898 617L1645 662 1642 740 895 690z" fill="#b0b0b0" />
      <path d="M836 562L898 617" strokeWidth="12" fill="none" strokeDasharray="10 3" />
      <path d="M265 665h14v15h-14zM1660 755h10v14h-10z" fill="none" stroke="#777" />
    </g>
  );
}

const pots = [
  [180, 250], [130, 266], [120, 272], [180, 273], [180, 275], [200, 274], [200, 274], [200, 270], [200, 266], [160, 258], [90, 232],
];

function Head() {
  return (
    <g transform="translate(1020 230) scale(.33333)" stroke={K} strokeWidth="3" strokeLinejoin="round">
      <path d="M700 630L748 635 746 672 738 674 735 780 697 778z" fill="#e1e8fa" />
      <path d="M700 670h46M705 735h30" fill="none" />
      <path d="M285 503L335 503 335 600 290 560z" fill="#f2f2f2" />
      <path d="M290 545h45v30h-35z" fill="#e1e8fa" />
      <path d="M275 860L410 900 460 940 680 990 645 980 275 955z" fill="#5b5b5b" />
      <path d="M366 153L470 170 445 560 410 930 285 940 330 560z" fill="#585858" />
      <path d="M366 153L445 160 470 172z" fill="#a6a6a6" />
      <path d="M690 180L755 179 690 860 672 988 640 960 650 500z" fill="#5a5a5a" />
      <path d="M455 55L483 76 475 172 446 158z" fill="#8b8b8b" />
      <path d="M455 55L668 67 693 90 483 76z" fill="#b0b0b0" />
      <path d="M483 76L693 90 685 190 475 175z" fill="#808080" />
      <path d="M488 80L480 172M688 92L680 186" fill="none" />
      <path d="M685 178L755 179 690 186z" fill="#a8a8a8" />
      <path d="M468 174L690 186 737 232 715 238 562 228 520 212z" fill="#b5b5b5" />
      <ellipse cx="619" cy="214" rx="75" ry="12" transform="rotate(4 619 214)" fill="#b5b5b5" strokeWidth="4" />
      <path d="M468 174L520 212 462 800 438 788z" fill="#868686" />
      <path d="M520 212L562 228 508 815 462 800z" fill="#464646" />
      <path d="M562 228L715 238 665 826 508 815z" fill="#808080" />
      <path d="M715 238L737 232 690 700 680 820 665 826z" fill="#666" />
      <path d="M438 788L462 800 450 940 415 910z" fill="#868686" />
      <path d="M462 800L508 815 498 950 450 938z" fill="#464646" />
      <path d="M508 815L665 826 645 962 498 950z" fill="#808080" />
      <path d="M665 826L680 820 670 960 645 962z" fill="#666" />
      <path d="M645 962L670 940 675 988z" fill="#6c6c6c" />
      <path d="M437 788L508 815 665 826 682 818" fill="none" strokeWidth="4" />
      <circle cx="629" cy="928" r="7" fill="#ccc" strokeWidth="4" />
      <path d="M480 950L620 962 605 970 500 965z" fill="#9aa5a3" />
      <path d="M505 960L590 968 584 1018 502 1010z" fill="#444" /><path d="M525 965L540 966 535 1015 520 1012z" fill="#666" stroke="none" />
      <path d="M500 975l8-5M495 990h12M590 985h8M505 1012l20 8h50" fill="none" strokeWidth="6" />
      <path d="M680 895l10-5M680 915l8-5" stroke="#bda82a" strokeWidth="6" fill="none" />

      <g>
        <path d="M220 470c40 60 60 150 58 230-4 100-24 170-48 220h-20l20-420z" fill="#2d2d2d" stroke="none" />
        {pots.map(([x, xe], i) => {
          const y = 472 + i * 43;
          return (
            <g key={x + "-" + i} stroke="#8b9a98" strokeWidth="2">
              <path d={`M${x} ${y}h${xe - x - 12}l10 6v24l-8 6H${x}z`} fill={i % 2 ? "#e2f0ee" : "#f4faf9"} />
              <path d={`M${x + 10} ${y + 22}H${xe - 4}`} stroke="#bccac8" strokeWidth="4" />
            </g>
          );
        })}
        <path d="M185 468h58l14 34h-78zM185 502h80l6 30h-86z" fill="#eef8f8" stroke="#a7b5b3" strokeWidth="2" />
        <path d="M190 480h55M188 515h72" stroke="#c9d6d5" strokeWidth="5" fill="none" />
        <path d="M98 472l22-12 14 6 26-5 8 20-6 40-30 5-38-5-14-20z" fill="#c5a72d" />
        <path d="M83 500l14-32 12 6-6 34z" fill="#6b6228" />
        <path d="M105 470l8 50M114 464l6 58M124 466l0 55M135 463l-2 58M143 465l-2 56M152 464l-3 55M112 462h12M128 460h12M144 461h12" fill="none" strokeWidth="4" />
        <path d="M160 466c12 0 18 10 18 28s-6 30-18 30z" fill="#c2c2c2" /><path d="M164 470v50M170 474v44" fill="none" />
        <path d="M78 520l12-15 22 8-2 24-22 3-12-8z" fill="#d8c975" />
        <path d="M133 538h35v10h-35z" fill="#d9c560" />
        <path d="M78 905l20 0 5 18-18 3zM110 905h30l-12 20-18 0z" fill="#d8c36a" />
        <path d="M92 908l-8 14M120 908l-8 16M132 908l-8 14" fill="none" strokeWidth="4" />
        <path d="M195 925l25-5 25 10-20 20-25-10z" fill="#c9a5a5" />
        <path d="M228 465l14-2C290 520 298 640 290 710 282 820 258 900 222 945l-10-5C250 890 272 800 280 700 284 620 270 520 228 465z" fill="#c99a9a" stroke="#8a6464" strokeWidth="2" />
        <path d="M240 461C285 465 305 600 300 720 292 850 257 920 220 948L232 948C285 910 312 800 310 690 308 550 280 450 240 461z" fill="#9d99bd" />
        <path d="M304 620L300 720 288 930 240 935C285 880 304 780 304 700z" fill="#c2bfe0" />
        <path d="M293 585l14 20v50l-12-10z" fill="#a8a5bf" />
      </g>

      <path d="M312 515c10-12 62-10 68 0v140h-72z" fill="#a9bdb5" />
      <path d="M325 515v140M340 512v145" stroke="#c2d4cb" strokeWidth="9" fill="none" />
      <path d="M370 515v140" stroke="#8a9c94" strokeWidth="9" fill="none" />
      <path d="M310 525c15 10 58 10 70 0M310 545c15 8 58 8 70 0M308 625c15 8 60 8 72 0" fill="none" />
      <path d="M385 618h45v60h-45z" fill="#b8cbc3" /><path d="M398 618v55M415 618v55" fill="none" stroke="#dfeee6" strokeWidth="6" />
      <path d="M388 440L458 445 445 600 378 595z" fill="#83dede" />
      <path d="M410 445L440 447 430 597 400 597z" fill="#a9ffff" stroke="none" />
      <path d="M401 445L391 590M455 448L440 600" stroke="#cfcfcf" strokeDasharray="8 5" fill="none" />
      <path d="M385 422L458 424 467 435 466 450 392 445z" fill="#a9d08b" /><path d="M385 422L458 424 467 434 396 432z" fill="#c8eeb0" />
      <path d="M368 585L440 595 452 600 450 616 372 610z" fill="#a9d08b" />
      <path d="M300 660L370 655 365 690 308 685z" fill="#e3f3ec" />
      <path d="M300 685L445 692 435 820 420 960 405 965 330 955 330 870 287 865z" fill="#cce2d8" />
      <path d="M412 695l30 0-7 125-22-2z" fill="#a9bdb2" stroke="none" />
      <path d="M385 690L445 692 435 820 385 820M385 820L408 822 402 962M385 715h18v25h-18zM367 905h16v22h-16zM408 820l14 2-7 52h-10M418 695l-6 120M382 870v40M376 925v32" fill="none" />
      <path d="M287 865L332 870 330 955 318 945 303 870" fill="#a5b8af" />
      <path d="M313 870c15 5 20 20 15 35l-20-18z" fill="#8d9f98" />
      <path d="M365 658L432 665 445 673 442 692 372 685 362 680z" fill="#a9d08b" />
      <circle cx="320" cy="809" r="7" fill="#f3ea19" />
      <path d="M338 958L410 962 408 993 340 990z" fill="#97a79f" /><path d="M340 972c20 8 50 8 68 0" fill="none" />
      <path d="M345 1015l20 10-8 8-15-6z" fill="#444" />
      <path d="M314 980L325 975 365 1000 400 1003 425 1020 424 1038 408 1046 375 1042 320 995z" fill="#2aa3a6" />
      <path d="M375 1030h32l17-8v14l-16 9-33-4z" fill="#19dede" />
      <path d="M322 984l50 44M365 1000l-8 18 18 22M372 1006l40 14M395 1005l-12 24M405 1010l-4 20M360 1012l30 14" fill="none" strokeWidth="5" />
      <path d="M388 998h12v8h-12z" fill="#e09a2a" stroke="none" />
    </g>
  );
}

function Label({ x, y, c, children, size = 40 }: { x: number; y: number; c: string; children: string; size?: number }) {
  return <text x={x} y={y} fill={c} stroke="none" fontSize={size} fontFamily="Liberation Sans, sans-serif">{children}</text>;
}

function Rotary() {
  return (
    <g transform="translate(1160 560) scale(.33333)" stroke={K} strokeWidth="3" strokeLinejoin="round" fill="none">
      <path d="M240 350c15 0 20 8 20 25l15 10 5 68 30 27 350 18v80L225 550z" fill="#fdfdfd" />
      <path d="M228 535l25 22M245 545l430 28M355 490v62M480 497v50M560 500v60M310 480l330 25" />
      <path d="M565 495c20 12 45 5 65-20" stroke="#555" />
      <path d="M222 560L640 585 660 565 735 580 728 637 120 600 125 560z" fill="#6b6b6b" />
      <path d="M225 565L640 590 655 625 230 597z" fill="#a3a3a3" />
      <path d="M250 570l380 25M232 597l428 26M425 565v35M440 590v20" strokeWidth="4" />
      <circle cx="233" cy="588" r="5" fill={K} /><circle cx="442" cy="601" r="5" fill={K} /><circle cx="649" cy="615" r="5" fill={K} /><circle cx="475" cy="566" r="3" fill={K} /><circle cx="538" cy="571" r="3" fill={K} />
      <path d="M105 343L135 368 120 600 85 570z" fill="#4c4c4c" />
      <path d="M105 343L205 348 238 370 135 368z" fill="#747474" />
      <path d="M135 368L238 370 222 605 120 600z" fill="#5e5e5e" />
      <ellipse cx="117" cy="437" rx="11" ry="63" fill="#ddd" strokeWidth="5" /><ellipse cx="117" cy="437" rx="6" ry="35" fill="#8b8b8b" />
      <circle cx="176" cy="517" r="35" /><circle cx="176" cy="517" r="27" strokeDasharray="3 14" strokeWidth="5" />
      <path d="M165 450h70M85 555l38 22 105 5M120 590l100 5" />
      <circle cx="202" cy="383" r="5" fill={K} /><circle cx="143" cy="550" r="6" fill={K} /><path d="M107 495h12v30h-12z" />
      <path d="M612 405c10-10 50-8 52 5v90l-60-10z" fill="#fff" />
      <ellipse cx="621" cy="440" rx="14" ry="38" fill="#eee" strokeWidth="4" /><ellipse cx="621" cy="440" rx="8" ry="22" fill="#999" />
      <path d="M652 392L690 402 668 580 662 560z" fill="#454545" />
      <path d="M652 392L758 397 797 415 690 405z" fill="#777" />
      <path d="M680 404L797 415 785 575 665 568z" fill="#5c5c5c" />
      <path d="M710 435L790 443 782 540 705 532z" strokeDasharray="8 4" />
      <circle cx="688" cy="422" r="7" fill="#222" /><path d="M665 575L735 580 728 637 665 630z" fill="#4d4d4d" /><path d="M685 570v8M712 570v8M695 572v8" strokeWidth="5" />

      <path d="M340 370l35-15 22 8 18 25 30 5 22-30 28-5 20 15 35-5 2 95-30 22-55 8-60-5-40-2-25-10-5-30z" fill="#f5102c" stroke="none" />
      <path d="M352 378l28-14M345 400l45-20M350 470l30 12M388 370l5 30 25 25M345 385l40 30M345 425l20 10 10 40M385 410l-5 35 20 10 10-15M410 395l20-8M475 380l20-8 38 15M478 400l20 40 10-35 32 30M475 430l20 30M490 385l5 20M515 380l28 25-15 20M455 475l35 14M390 465l20 20M365 365l20 15M505 485l30 2M350 455l8 15M545 380v15M520 445l25-5M415 475l30 5" stroke="#1515ff" strokeWidth="10" />
      <path d="M345 380l45 15 10 35M360 365l30 10M480 375l20 20 15 50M520 375l20 30M355 465l40 15M470 460l35 25M360 400l15 30M530 400l10 30" stroke="#ff1030" strokeWidth="4" />
      <path d="M415 400l40-10 12 40 10 40-55 25-20-35z" fill="#b9b9b9" stroke="none" />
      <path d="M420 460l15 35M435 400l15 60" stroke="#8f8f9f" strokeWidth="4" />
      <path d="M375 410l15-8 12 12-18 12zM400 420l35 30" fill="#8fae8c" stroke="#6d9a6d" />
      <path d="M300 500c5 20 35 15 55 0" stroke="#888" />

      <g strokeWidth="5">
        <path d="M305 527h60M470 517h50" stroke="#c9c9c9" /><path d="M510 510l40 8-40 6zM330 520l-30 6 30 8z" fill="#bbb" stroke="none" />
        <path d="M433 530l10-85" stroke="#b7bcc7" />
        <path d="M90 448l180 5M90 430h85l18 22" stroke="#bcbcbc" />
        <path d="M210 330l-4 120" stroke="#bcbcbc" />
      </g>
      <path d="M80 465L98 240M68 302l22 20 125 8M68 302l-5 110M40 410l40 40M60 445h25" stroke="#8b5757" strokeWidth="4" />
      <path d="M100 200l9 47H90z" fill="#8b5757" stroke="none" /><circle cx="40" cy="411" r="9" fill="#8b5757" stroke="none" />
      <Label x={95} y={194} c="#9a6a6a">Z</Label><Label x={14} y={414} c="#9a6a6a">Y</Label>
      <path d="M450 340L463 200" stroke="#0a3bdf" strokeWidth="10" /><path d="M468 145l7 62-22-3z" fill="#0a3bdf" stroke="none" />
      <path d="M438 365l4-35h18l-2 35z" fill="#f00000" stroke="none" /><path d="M440 362h18v28l-18-5z" fill="#a5683c" stroke="none" />
      <path d="M437 455l8-62" stroke="#5a85dc" strokeWidth="9" />
      <path d="M455 445l60 14 225 8" stroke="#cf6e75" strokeWidth="4" />
      <path d="M685 457l58 12-58 11z" fill="#e08b90" stroke="none" />
      <path d="M445 440l20 5-10 15zM545 452h32v15l-30-4zM545 425l30 8-28 7zM338 418l-30 5 30 8z" fill="#e00010" stroke="none" />
      <path d="M345 440l-40 5 40 6z" fill="#b9784a" stroke="none" />
      <path d="M515 425h30v14h-30zM515 454h32v16h-32zM340 436h25v14h-25zM345 412h22v12h-22z" fill="#d9d9d9" stroke="#999" />
      <circle cx="445" cy="548" r="10" fill="#c9854b" stroke="none" />
      <path d="M303 376l20 34M324 376l-20 34M308 376l12 34M420 262l18 20M438 262l-18 22M418 290h18l-18 28h20M415 355h20" stroke="#ff1010" strokeWidth="4" />
      <Label x={401} y={139} c="#2342e8">ZM</Label>
      <Label x={390} y={281} c="#2342e8">ZC</Label>
      <Label x={412} y={360} c="#c9854b" size={34}>Z</Label>
      <Label x={380} y={398} c="#2c8b3e" size={34}>YM</Label>
      <Label x={690} y={514} c="#e01b24">XM</Label>
      <Label x={550} y={511} c="#c94a4a" size={38}>XC</Label>
      <Label x={290} y={511} c="#c2c2c2" size={36}>X</Label>
      <Label x={546} y={560} c="#c2c2c2" size={36}>X</Label>
      <Label x={432} y={587} c="#c9854b" size={34}>Y</Label>
      <Label x={440} y={505} c="#c9854b" size={34}>Y</Label>
    </g>
  );
}

function Scene() {
  return (
    <svg viewBox="881 184 979 673" preserveAspectRatio="xMidYMid slice" className="block h-full w-full" role="img" aria-label="五轴机床模型">
      <ColumnAndBase />
      <Head />
      <Rotary />
      <path d="M989 858l1.500-24-2-.5 6.500-16 4 17-3 .5-2 23z" fill="#b52a2e" stroke="#8b1518" strokeWidth=".6" />
      <path d="M992 802l8 8M1000 802l-8 8" stroke="#d22" strokeWidth="1.200" />
    </svg>
  );
}

function Viewport() {
  return (
    <main className="flex min-h-0 min-w-0 flex-col border-l border-[#a0a0a0]">
      <div className="flex h-[27px] shrink-0 border-b-2 border-[#005f87] bg-[#efefef] text-[12px]">
        <button type="button" className="flex w-24 items-center gap-1 pl-1.5">
          <Svg size={16} box="0 0 16 16"><path d="M1 1l4 2 5-2v5M1 1v6M5 3v2M10 1l5-1v13l-3 2V2" stroke={D} /><circle cx="5.500" cy="10.500" r="5" stroke={D} /><path d="M3 13l2-4 3-2-2 4z" stroke={D} /></Svg>
          发现中心
        </button>
        <div className="flex items-center bg-[#005f87] pr-[7px] pl-1.5 text-white">
          <button type="button" className="flex items-center gap-1 whitespace-nowrap">
            <Svg size={16} box="0 0 16 16"><path d="M5 .7H1v4.500h4M1 7.500h4v4.500H1" stroke="#fff" strokeWidth="1.300" /><path d="M8 9c2-4 6-3 7-1V5M15 11c-2 4-6 3-7 1v3" stroke="#fff" strokeWidth="1.300" /></Svg>
            <span className="font-['Noto_Sans','Noto_Sans_CJK_SC',sans-serif]">沈阳王工WZ (20).prt</span>
            <Svg size={11} box="0 0 11 11" className="ml-0.5"><path d="M5.500 1H1v9h6.500V7.500M5.500 1l2 1.500" stroke="#fff" strokeWidth="1.600" /><path d="M4.500 7.500V6L8 3l2 1.500L6 8z" fill="#fff" /></Svg>
          </button>
          <button type="button" aria-label="关闭" className="ml-[7px]">
            <Svg size={9} box="0 0 9 9"><path d="M1 1l7 7M8 1L1 8" stroke="#9a9a9a" strokeWidth="2" /></Svg>
          </button>
        </div>
      </div>
      <div className="relative min-h-0 flex-1 overflow-hidden bg-gradient-to-b from-[#b3b4b6] to-[#e9eaeb]">
        <Scene />
        <p className="absolute right-1 bottom-1 flex items-center leading-5 text-[#555] [text-shadow:1px_1px_0_#fff]">
          <span className="font-['Liberation_Mono',monospace] text-[13px]">UG</span>
          <span className="font-['Noto_Sans_CJK_SC',sans-serif] text-[16px] font-light">爱好者论坛</span>
          <span className="ml-2 font-['Liberation_Mono',monospace] text-[13px]">WWW.UGSNX.COM</span>
        </p>
      </div>
    </main>
  );
}

function ErrorDialog() {
  return (
    <div role="alertdialog" aria-labelledby="dlg-title" aria-describedby="dlg-text" className="absolute top-[418px] left-[757px] w-[343px] border border-t-0 border-[#a0a0a0] bg-[#dcdcdc] text-[12px] text-[#222]">
      <h2 id="dlg-title" className="-mx-px bg-[#005f87] pl-[9px] leading-7 text-white">程序管理器</h2>
      <div className="flex gap-4 pt-2 pl-3.5">
        <Svg size={30} box="0 0 30 30" className="mt-[3px]">
          <path d="M.5.5h29v29H.5z" fill="#fb1530" stroke="#a0101e" /><path d="M5 5l20 20M25 5L5 25" stroke="#fff" strokeWidth="2" />
        </Svg>
        <p id="dlg-text" className="leading-[17px]">无法启动程序管理器，因为机床代码仿真不可用。<br />检查机床配置文件。</p>
      </div>
      <div className="mt-2 mb-3 flex justify-center">
        <button type="button" className="h-[25px] w-[63px] border border-[#005f87] text-[#005f87]">确定(<u>O</u>)</button>
      </div>
    </div>
  );
}

export default function App() {
  return (
    <div className="relative flex h-screen flex-col overflow-hidden bg-[#efefef] font-['Open_Sans','Noto_Sans_CJK_SC',sans-serif] text-[12px] text-black">
      <Header />
      <Ribbon />
      <SelectionBar />
      <div className="grid min-h-0 flex-1 grid-cols-[30px_minmax(0,850fr)_minmax(0,980fr)] grid-rows-[minmax(0,1fr)]">
        <Sidebar />
        <Navigator />
        <Viewport />
      </div>
      <ErrorDialog />
    </div>
  );
}
